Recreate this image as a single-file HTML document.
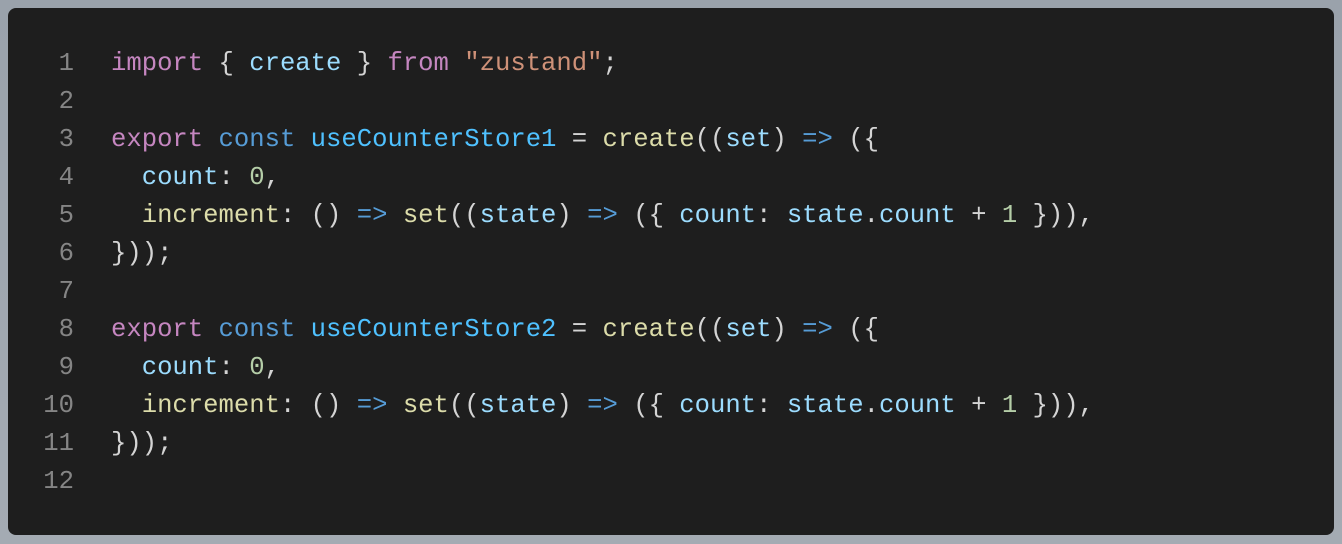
<!DOCTYPE html>
<html><head><style>
html,body{margin:0;padding:0}
body{width:1342px;height:544px;background:linear-gradient(180deg,#9aa2ab,#a4abb3);position:relative;overflow:hidden}
.card{position:absolute;left:8px;top:8px;width:1326px;height:527px;background:#1e1e1e;border-radius:8px}
pre{margin:0;position:absolute;top:37px;left:0;font-family:"Liberation Mono",monospace;font-size:25.6px;line-height:38px;color:#d4d4d4;white-space:pre}
.ln{position:absolute;left:30px;width:36px;text-align:right;color:#858585;top:37px;font-family:"Liberation Mono",monospace;font-size:25.6px;line-height:38px;margin:0}
.code{left:103px}
.k{color:#c586c0}.s{color:#569cd6}.f{color:#dcdcaa}.v{color:#9cdcfe}.c{color:#4fc1ff}.st{color:#ce9178}.n{color:#b5cea8}
</style></head><body><div class="card">
<pre class="ln">1
2
3
4
5
6
7
8
9
10
11
12</pre>
<pre class="code"><span class="k">import</span> { <span class="v">create</span> } <span class="k">from</span> <span class="st">"zustand"</span>;

<span class="k">export</span> <span class="s">const</span> <span class="c">useCounterStore1</span> = <span class="f">create</span>((<span class="v">set</span>) <span class="s">=&gt;</span> ({
  <span class="v">count</span>: <span class="n">0</span>,
  <span class="f">increment</span>: () <span class="s">=&gt;</span> <span class="f">set</span>((<span class="v">state</span>) <span class="s">=&gt;</span> ({ <span class="v">count</span>: <span class="v">state</span>.<span class="v">count</span> + <span class="n">1</span> })),
}));

<span class="k">export</span> <span class="s">const</span> <span class="c">useCounterStore2</span> = <span class="f">create</span>((<span class="v">set</span>) <span class="s">=&gt;</span> ({
  <span class="v">count</span>: <span class="n">0</span>,
  <span class="f">increment</span>: () <span class="s">=&gt;</span> <span class="f">set</span>((<span class="v">state</span>) <span class="s">=&gt;</span> ({ <span class="v">count</span>: <span class="v">state</span>.<span class="v">count</span> + <span class="n">1</span> })),
}));
</pre>
</div></body></html>
